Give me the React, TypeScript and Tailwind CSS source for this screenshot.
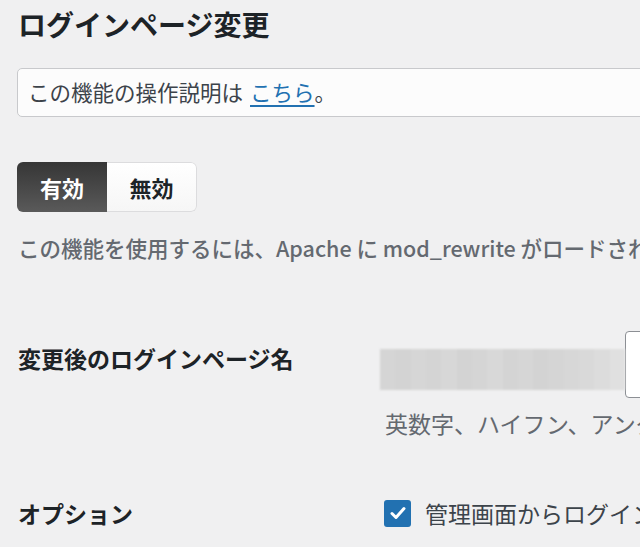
const font = { fontFamily: '"Noto Sans CJK JP", "Noto Sans", sans-serif' };

const stripes = [
    '#d5d5d5', '#d3d3d3', '#d6d6d6', '#d4d4d4', '#d7d7d7', '#d3d3d3', '#d5d5d5', '#d8d8d8',
    '#d4d4d4', '#d6d6d6', '#d3d3d3', '#d5d5d5', '#d7d7d7', '#d9d9d9', '#dcdcdc', '#e0e0e0',
];

export default function App() {
    return (
        <div style={font} className="h-[547px] w-[640px] overflow-hidden bg-[#f0f0f1] pl-[17px] text-[#3c434a]">
            <h1 className="mt-[5px] pl-[1px] text-[28px] leading-[38px] font-bold whitespace-nowrap text-[#1d2327]">
                ログインページ変更
            </h1>

            {/* notice */}
            <div className="mt-[25px] flex h-[49px] w-[800px] items-center rounded-[5px] border border-[#c8c9cc] bg-[#fcfcfc] px-[10px] text-[21.5px] whitespace-nowrap">
                この機能の操作説明は{' '}
                <a href="#" className="ml-[7px] text-[#2271b1] underline underline-offset-4">
                    こちら
                </a>
                。
            </div>

            {/* toggle */}
            <div className="mt-[45px] flex h-[50px] w-[180px] overflow-hidden rounded-[6px] text-[22px] font-bold">
                <div className="flex w-[90px] items-center justify-center bg-linear-to-b from-[#363636] to-[#5a5a5a] text-white">
                    有効
                </div>
                <div className="flex w-[90px] items-center justify-center rounded-r-[6px] border border-l-0 border-[#dcdcde] bg-linear-to-b from-white to-[#f6f6f6] text-[#1d2327]">
                    無効
                </div>
            </div>

            <p className="mt-[21px] pl-[1px] text-[21.5px] leading-[30px] font-medium whitespace-nowrap text-[#646970]">
                この機能を使用するには、Apache に mod_rewrite がロードされている必要があります。
            </p>

            {/* form table */}
            <div className="mt-[68px] flex">
                <div className="w-[363px] shrink-0 pt-[12px] pl-[1px] text-[23px] leading-[30px] font-bold whitespace-nowrap text-[#1d2327]">
                    変更後のログインページ名
                </div>
                <div className="shrink-0">
                    <div className="flex items-start">
                        <div className="mt-[18px] flex h-[41px] w-[245px] overflow-hidden blur-[1px]">
                            {stripes.map((c, i) => (
                                <div key={i} className="h-full flex-1" style={{ background: c }} />
                            ))}
                        </div>
                        <div className="h-[67px] w-[300px] rounded-[4px] border border-[#8c8f94] bg-white" />
                    </div>
                    <p className="mt-[10px] pl-[5px] text-[23px] leading-[30px] whitespace-nowrap text-[#646970]">
                        英数字、ハイフン、アンダースコアが使用できます。
                    </p>
                </div>
            </div>

            <div className="mt-[60px] flex">
                <div className="w-[363px] shrink-0 pl-[1px] text-[23px] leading-[30px] font-bold whitespace-nowrap text-[#1d2327]">
                    オプション
                </div>
                <label className="flex shrink-0 items-center pl-[4px] text-[23px] leading-[30px] whitespace-nowrap">
                    <span className="mr-[14px] flex h-[27px] w-[27px] items-center justify-center rounded-[3px] bg-[#2271b1]">
                        <svg viewBox="0 0 20 20" className="h-[20px] w-[20px]">
                            <path d="M4 10.5 L8 14.5 L16 5.5" fill="none" stroke="white" strokeWidth="3" strokeLinecap="round" strokeLinejoin="round" />
                        </svg>
                    </span>
                    管理画面からログインページへのリダイレクトを無効化
                </label>
            </div>
        </div>
    );
}
